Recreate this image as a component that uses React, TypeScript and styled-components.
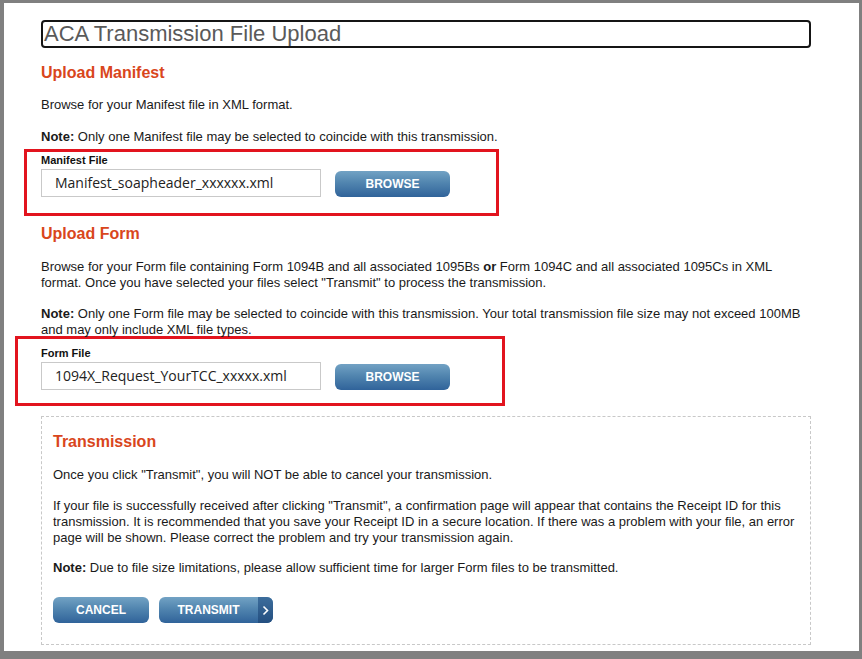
import styled, { createGlobalStyle } from "styled-components";

const GlobalStyle = createGlobalStyle`
  html, body {
    margin: 0;
    padding: 0;
    background: #808080;
  }
  body {
    font-family: "Liberation Sans", Arial, sans-serif;
    color: #111;
  }
`;

const Frame = styled.div`
  box-sizing: border-box;
  height: 659px;
  padding: 3px 3px 8px 4px;
  background: #808080;
`;

const Page = styled.div`
  box-sizing: border-box;
  height: 100%;
  padding: 17px 48px 0 37px;
  background: #fff;
`;

const TitleBox = styled.div`
  box-sizing: border-box;
  height: 28px;
  border: 2px solid #151515;
  border-radius: 4px;
  padding-left: 1px;
  font-size: 22px;
  line-height: 24px;
  color: #5a5a5a;
`;

const Heading = styled.h2<{ $top: number }>`
  margin: ${(p) => p.$top}px 0 0;
  font-size: 16px;
  line-height: 20px;
  font-weight: bold;
  color: #d9461c;
`;

const Para = styled.p<{ $top: number }>`
  margin: ${(p) => p.$top}px 0 0;
  font-size: 13px;
  line-height: 16px;
  color: #1a1a1a;
`;

const Strong = styled.strong`
  font-weight: bold;
`;

const RedBox = styled.div<{ $shift: number; $width: number; $top: number; $pt: number; $pb: number }>`
  box-sizing: border-box;
  width: ${(p) => p.$width}px;
  margin: ${(p) => p.$top}px 0 0 ${(p) => -p.$shift}px;
  padding: ${(p) => p.$pt}px 0 ${(p) => p.$pb}px ${(p) => p.$shift - 3}px;
  border: 3px solid #e2141e;
`;

const FieldLabel = styled.div`
  font-size: 11px;
  line-height: 14px;
  font-weight: bold;
  color: #111;
`;

const FieldRow = styled.div`
  display: flex;
  align-items: flex-end;
  gap: 14px;
  margin-top: 2px;
`;

const FileInput = styled.div`
  box-sizing: border-box;
  width: 280px;
  height: 28px;
  border: 1px solid #c9c9c9;
  padding-left: 13px;
  font-family: "Open Sans", "DejaVu Sans", sans-serif;
  font-size: 14px;
  line-height: 26px;
  color: #222;
`;

const BlueButton = styled.button<{ $width: number }>`
  position: relative;
  box-sizing: border-box;
  width: ${(p) => p.$width}px;
  height: 26px;
  padding: 0;
  border: none;
  border-radius: 6px;
  overflow: hidden;
  background: linear-gradient(to bottom, #72a2c4 0%, #5185af 45%, #30639a 100%);
  color: #fff;
  font-family: "Liberation Sans", Arial, sans-serif;
  font-size: 12px;
  font-weight: bold;
  line-height: 26px;
  text-align: center;
  cursor: pointer;
`;

const ArrowTab = styled.span`
  position: absolute;
  top: 0;
  right: 0;
  width: 15px;
  height: 100%;
  display: flex;
  align-items: center;
  justify-content: center;
  background: linear-gradient(to bottom, #3c6d9c 0%, #244f80 100%);
`;

const TransmitLabel = styled.span`
  display: block;
  padding-right: 15px;
`;

const DashedBox = styled.div`
  box-sizing: border-box;
  margin-top: 10px;
  height: 229px;
  padding: 15px 11px 0;
  border: 1px dashed #c8c8c8;
`;

const ButtonRow = styled.div`
  display: flex;
  gap: 10px;
  margin-top: 21px;
`;

export default function App() {
  return (
    <>
      <GlobalStyle />
      <Frame>
        <Page>
          <TitleBox>ACA Transmission File Upload</TitleBox>

          <Heading $top={15}>Upload Manifest</Heading>
          <Para $top={14}>Browse for your Manifest file in XML format.</Para>
          <Para $top={16}>
            <Strong>Note:</Strong> Only one Manifest file may be selected to coincide with this
            transmission.
          </Para>

          <RedBox $shift={17} $width={475} $top={4} $pt={1} $pb={16}>
            <FieldLabel>Manifest File</FieldLabel>
            <FieldRow>
              <FileInput>Manifest_soapheader_xxxxxx.xml</FileInput>
              <BlueButton $width={115}>BROWSE</BlueButton>
            </FieldRow>
          </RedBox>

          <Heading $top={8}>Upload Form</Heading>
          <Para $top={15}>
            Browse for your Form file containing Form 1094B and all associated 1095Bs{" "}
            <Strong>or</Strong> Form 1094C and all associated 1095Cs in XML format. Once you have
            selected your files select "Transmit" to process the transmission.
          </Para>
          <Para $top={15}>
            <Strong>Note:</Strong> Only one Form file may be selected to coincide with this
            transmission. Your total transmission file size may not exceed 100MB and may only
            include XML file types.
          </Para>

          <RedBox $shift={26} $width={490} $top={-2} $pt={7} $pb={13}>
            <FieldLabel>Form File</FieldLabel>
            <FieldRow>
              <FileInput>1094X_Request_YourTCC_xxxxx.xml</FileInput>
              <BlueButton $width={115}>BROWSE</BlueButton>
            </FieldRow>
          </RedBox>

          <DashedBox>
            <Heading $top={0}>Transmission</Heading>
            <Para $top={15}>
              Once you click "Transmit", you will NOT be able to cancel your transmission.
            </Para>
            <Para $top={15}>
              If your file is successfully received after clicking "Transmit", a confirmation page
              will appear that contains the Receipt ID for this transmission. It is recommended that
              you save your Receipt ID in a secure location. If there was a problem with your file,
              an error page will be shown. Please correct the problem and try your transmission
              again.
            </Para>
            <Para $top={14}>
              <Strong>Note:</Strong> Due to file size limitations, please allow sufficient time for
              larger Form files to be transmitted.
            </Para>
            <ButtonRow>
              <BlueButton $width={96}>CANCEL</BlueButton>
              <BlueButton $width={114}>
                <TransmitLabel>TRANSMIT</TransmitLabel>
                <ArrowTab>
                  <svg width="7" height="11" viewBox="0 0 7 11">
                    <path d="M1.5 1.5 L5.5 5.5 L1.5 9.5" fill="none" stroke="#fff" strokeWidth="1.6" />
                  </svg>
                </ArrowTab>
              </BlueButton>
            </ButtonRow>
          </DashedBox>
        </Page>
      </Frame>
    </>
  );
}
